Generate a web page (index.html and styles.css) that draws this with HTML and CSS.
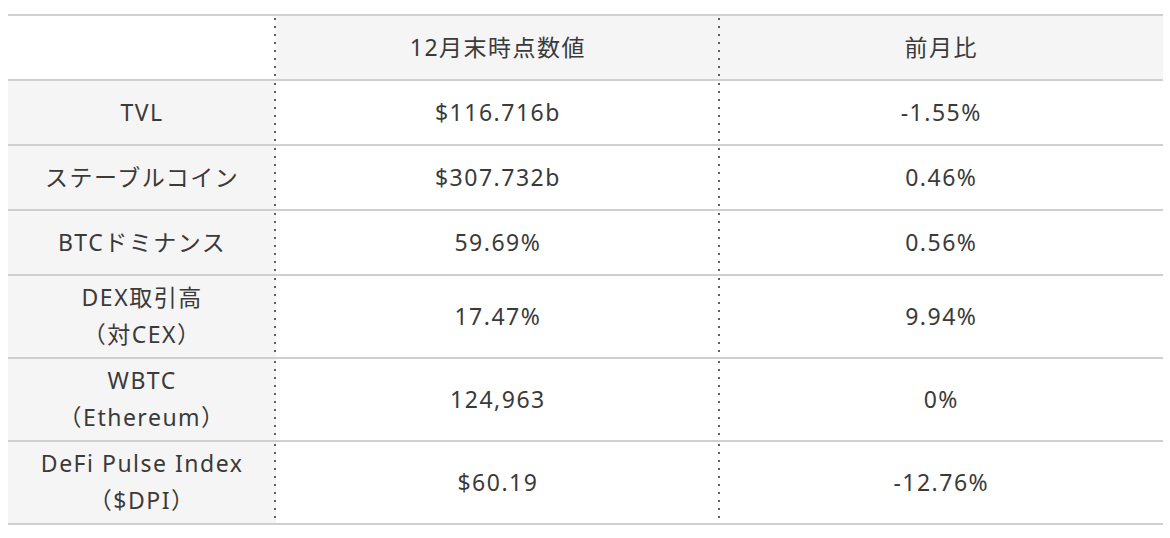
FILE: index.html
```html
<!DOCTYPE html>
<html lang="ja">
<head>
<meta charset="utf-8">
<link rel="stylesheet" href="styles.css">
</head>
<body>
<table class="stats">
  <thead>
    <tr>
      <th class="label blank"></th>
      <th class="val">12月末時点数値</th>
      <th class="val last">前月比</th>
    </tr>
  </thead>
  <tbody>
    <tr><td class="label">TVL</td><td class="val">$116.716b</td><td class="val last">-1.55%</td></tr>
    <tr><td class="label">ステーブルコイン</td><td class="val">$307.732b</td><td class="val last">0.46%</td></tr>
    <tr><td class="label">BTCドミナンス</td><td class="val">59.69%</td><td class="val last">0.56%</td></tr>
    <tr><td class="label">DEX取引高<br>（対CEX）</td><td class="val">17.47%</td><td class="val last">9.94%</td></tr>
    <tr><td class="label">WBTC<br>（Ethereum）</td><td class="val">124,963</td><td class="val last">0%</td></tr>
    <tr><td class="label">DeFi Pulse Index<br>（$DPI）</td><td class="val">$60.19</td><td class="val last">-12.76%</td></tr>
  </tbody>
</table>
</body>
</html>
```

FILE: styles.css
```css
html, body {
  margin: 0;
  padding: 0;
  background: #ffffff;
}
body {
  padding: 14px 7px 0 8px;
  font-family: "Noto Sans", "Noto Sans CJK JP", sans-serif;
  color: #3a3a3a;
}
.stats {
  width: 1155px;
  border-collapse: collapse;
  border-top: 2px solid #cfcfcf;
  font-size: 23px;
  letter-spacing: 1.5px;
}
.stats th,
.stats td {
  height: 56px;
  padding: 3px 0 4px;
  line-height: 37px;
  text-align: center;
  vertical-align: middle;
  font-weight: normal;
  border-bottom: 2px solid #cfcfcf;
  background-color: #ffffff;
  background-image: linear-gradient(to bottom, #606060 2px, transparent 2px);
  background-size: 2px 8px;
  background-repeat: repeat-y;
  background-position: right 2px;
}
.stats .last {
  background-image: none;
}
.stats .label {
  width: 268px;
  background-color: #f5f5f5;
}
.stats .label.blank {
  background-color: #ffffff;
}
.stats th.val {
  background-color: #f5f5f5;
}
.stats th.last {
  background-image: none;
}
.stats .val {
  width: 443px;
}
```
